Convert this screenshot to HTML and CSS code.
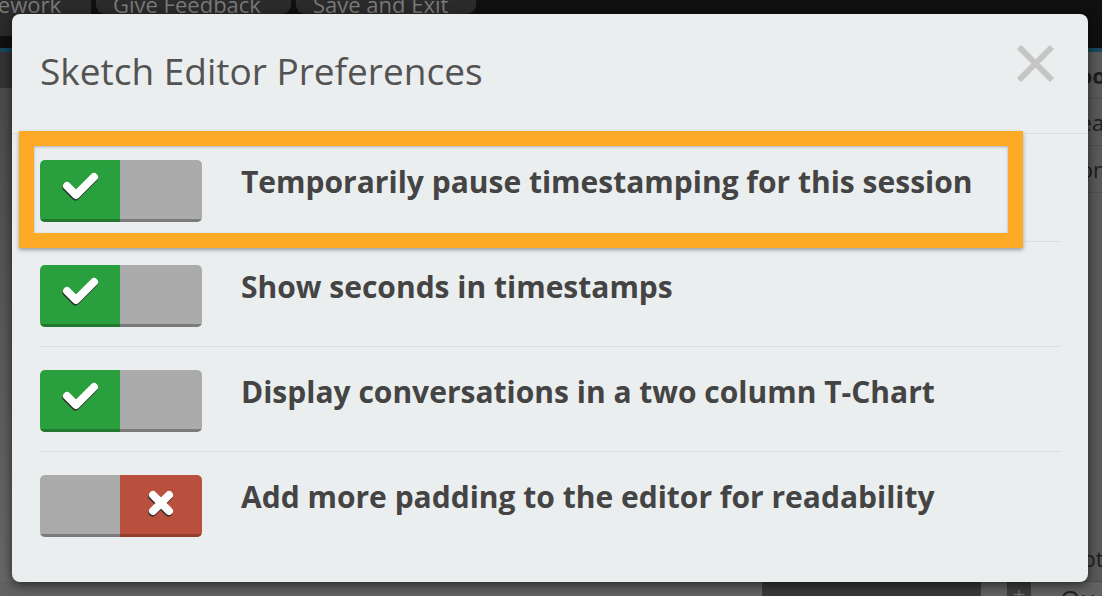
FILE: index.html
```html
<!DOCTYPE html>
<html>
<head>
	<meta charset="utf-8">
	<title>Sketch Editor Preferences</title>
	<link rel="stylesheet" href="styles.css">
</head>
<body>

	<div class="app">
		<div class="topbar">
			<span class="topbtn first">Homework</span>
			<span class="topbtn second">Give Feedback</span>
			<span class="topbtn third">Save and Exit</span>
		</div>
		<div class="work">
			<div class="canvas">
				<div class="subbar"></div>
				<div class="sheet"></div>
			</div>
			<div class="sidebar">
				<div class="side-item bold">Tool</div>
				<div class="side-item">Readal</div>
				<div class="side-item">Conne</div>
				<div class="side-fill"></div>
				<div class="side-item">Note</div>
			</div>
		</div>
		<div class="footer">
			<span class="foot-light"></span>
			<span class="foot-dark"></span>
			<span class="foot-icon">+</span>
			<span class="foot-text">Questions</span>
		</div>
	</div>

	<div class="modal">
		<div class="modal-head">
			<h1 class="modal-title">Sketch Editor Preferences</h1>
			<span class="close">
				<svg width="39" height="39" viewBox="0 0 39 39">
					<path d="M3 3 L36 36 M36 3 L3 36" stroke="#c5c5c5" stroke-width="6" fill="none"/>
				</svg>
			</span>
		</div>
		<ul class="pref-list">
			<li class="pref">
				<div class="toggle">
					<span class="half on">
						<svg width="80" height="59" viewBox="0 0 80 59">
							<path class="shade" d="M27 26 L36 35 L54 17"/>
							<path class="mark" d="M27 26 L36 35 L54 17"/>
						</svg>
					</span>
					<span class="half off"></span>
				</div>
				<span class="pref-label">Temporarily pause timestamping for this session</span>
			</li>
			<li class="pref">
				<div class="toggle">
					<span class="half on">
						<svg width="80" height="59" viewBox="0 0 80 59">
							<path class="shade" d="M27 26 L36 35 L54 17"/>
							<path class="mark" d="M27 26 L36 35 L54 17"/>
						</svg>
					</span>
					<span class="half off"></span>
				</div>
				<span class="pref-label">Show seconds in timestamps</span>
			</li>
			<li class="pref">
				<div class="toggle">
					<span class="half on">
						<svg width="80" height="59" viewBox="0 0 80 59">
							<path class="shade" d="M27 26 L36 35 L54 17"/>
							<path class="mark" d="M27 26 L36 35 L54 17"/>
						</svg>
					</span>
					<span class="half off"></span>
				</div>
				<span class="pref-label">Display conversations in a two column T-Chart</span>
			</li>
			<li class="pref">
				<div class="toggle">
					<span class="half off"></span>
					<span class="half no">
						<svg width="82" height="59" viewBox="0 0 82 59">
							<path class="shade" d="M33 20 L49 36 M49 20 L33 36"/>
							<path class="mark" d="M33 20 L49 36 M49 20 L33 36"/>
						</svg>
					</span>
				</div>
				<span class="pref-label">Add more padding to the editor for readability</span>
			</li>
		</ul>
	</div>

	<!-- annotation frame round the first option -->
	<div class="highlight"></div>

</body>
</html>
```
FILE: styles.css
```css
html, body {
	margin: 0;
	height: 100%;
}

body {
	overflow: hidden;
	background-color: #5a5a5a;
	font-family: "Open Sans", "Liberation Sans", sans-serif;
}

.app {
	display: flex;
	flex-direction: column;
	height: 596px;
}

/* background page, dimmed behind the dialog */
.topbar {
	display: flex;
	align-items: flex-start;
	gap: 5px;
	height: 48px;
	background-color: #101010;
	border-bottom: 4px solid #17485c;
}

.topbtn {
	flex: none;
	height: 14px;
	padding: 0 30px 0 17px;
	overflow: hidden;
	white-space: nowrap;
	background-color: #2b2b2b;
	border-radius: 0 0 9px 9px;
	color: #7a7a7a;
	font-size: 22px;
	line-height: 8px;
}

.first {
	height: 36px;
	margin-left: -72px;
	padding: 0 30px 0 20px;
}

.third {
	padding-right: 28px;
}

.work {
	display: flex;
	flex: 1;
}

.canvas {
	display: flex;
	flex-direction: column;
	flex: 1;
}

.subbar {
	height: 36px;
	background-color: #333;
}

.sheet {
	flex: 1;
	background: linear-gradient(#4b4b4b, #676767);
}

.sidebar {
	display: flex;
	flex-direction: column;
	width: 42px;
	background-color: #595959;
	color: #1e1e1e;
	font-size: 22px;
	white-space: nowrap;
	overflow: hidden;
}

.side-item {
	padding: 8px 0 8px 6px;
	border-bottom: 1px solid #4e4e4e;
	line-height: 30px;
}

.side-item.bold {
	font-weight: bold;
}

.side-fill {
	flex: 1;
}

.footer {
	display: flex;
	height: 14px;
	overflow: hidden;
	background-color: #626262;
}

.footer span {
	flex: none;
}

.foot-light {
	width: 762px;
}

.foot-dark {
	width: 219px;
	background-color: #393939;
}

.foot-icon {
	width: 24px;
	margin-left: 26px;
	background-color: #3d3d3d;
	color: #6a6a6a;
	text-align: center;
	font-size: 22px;
	line-height: 22px;
}

.foot-text {
	margin-left: 29px;
	color: #222;
	font-size: 26px;
	line-height: 34px;
}

/* dialog */
.modal {
	position: absolute;
	left: 12px;
	top: 14px;
	width: 1076px;
	height: 568px;
	box-sizing: border-box;
	background-color: #ebeeef;
	border-radius: 8px;
	box-shadow: 0 3px 12px rgba(0, 0, 0, 0.6);
}

.modal-head {
	display: flex;
	align-items: flex-start;
	height: 120px;
	box-sizing: border-box;
	padding: 35px 33px 0 28px;
	border-bottom: 1px solid #dcdfe1;
}

.modal-title {
	flex: 1;
	margin: 0;
	color: #535353;
	font-size: 37px;
	font-weight: normal;
	line-height: 43px;
}

.close {
	display: block;
	width: 39px;
	height: 39px;
	margin-top: -5px;
}

.close svg {
	display: block;
}

.pref-list {
	list-style: none;
	margin: 0;
	padding: 0 27px 0 28px;
}

.pref {
	display: flex;
	align-items: flex-start;
	gap: 39px;
	padding: 23px 0 19px;
	border-bottom: 1px solid #dcdfe1;
}

.pref:first-child {
	padding-top: 26px;
}

.pref:last-child {
	border-bottom: none;
}

.toggle {
	display: flex;
	flex: none;
	width: 162px;
	height: 62px;
	border-radius: 5px;
	overflow: hidden;
}

.half {
	display: block;
	flex: 1;
	border-bottom: 3px solid;
}

.half:first-child {
	flex: none;
	width: 80px;
}

.half svg {
	display: block;
}

.on {
	background-color: #2a9f3d;
	border-bottom-color: #22782f;
}

.off {
	background-color: #ababab;
	border-bottom-color: #7b7b7b;
}

.no {
	background-color: #b94f3d;
	border-bottom-color: #953e30;
}

.mark, .shade {
	fill: none;
	stroke-width: 8;
	stroke-linecap: round;
	stroke-linejoin: round;
}

.mark {
	stroke: #fff;
}

.shade {
	stroke: #2a2a2a;
	transform: translate(-0.5px, 1.5px);
}

.pref-label {
	margin-top: 2px;
	color: #444;
	font-size: 30px;
	font-weight: bold;
	line-height: 40px;
	white-space: nowrap;
}

.highlight {
	position: absolute;
	left: 19px;
	top: 131px;
	width: 1004px;
	height: 117px;
	box-sizing: border-box;
	border: 15px solid #fdaa27;
	box-shadow: 0 2px 4px rgba(0, 0, 0, 0.35), inset 0 1px 3px rgba(0, 0, 0, 0.25);
}
```
